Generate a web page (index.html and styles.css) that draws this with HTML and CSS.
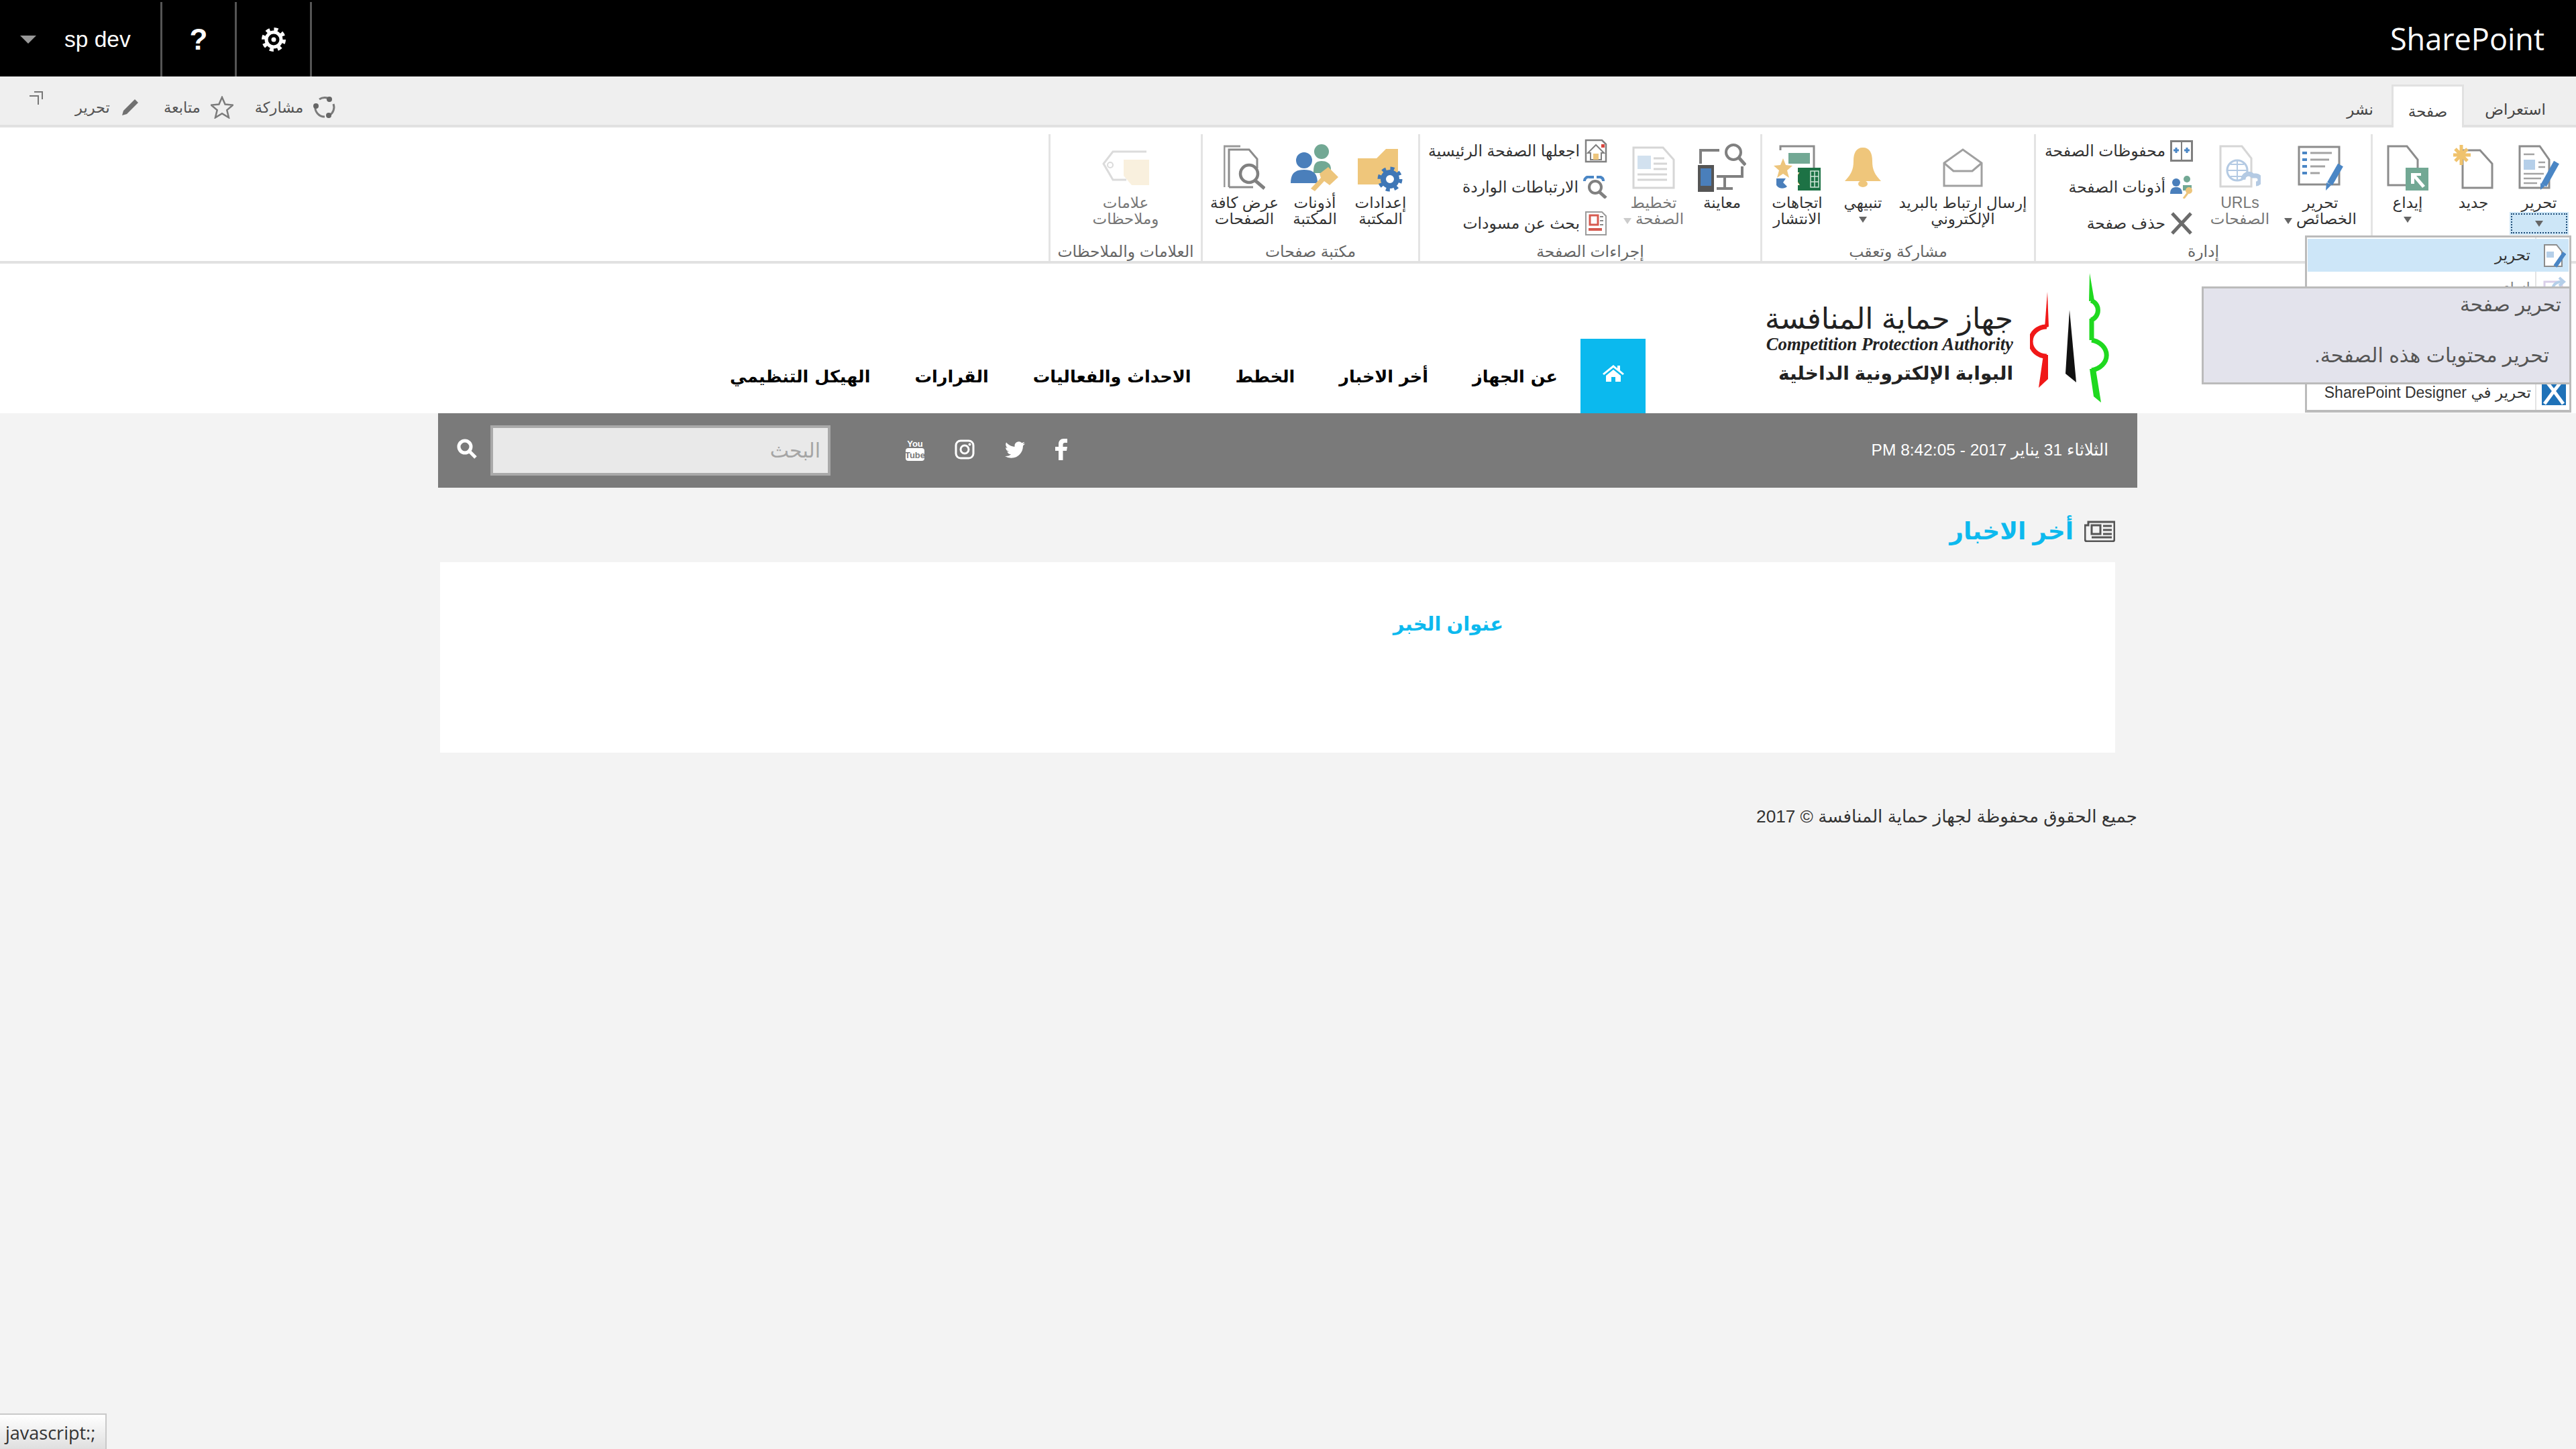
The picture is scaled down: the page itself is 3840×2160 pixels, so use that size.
FILE: index.html
```html
<!DOCTYPE html>
<html lang="ar" dir="rtl">
<head>
    <meta charset="utf-8">
    <title>أخر الاخبار</title>
    <link rel="stylesheet" href="styles.css">
</head>
<body>
    <div class="suite-bar" dir="ltr">
        <div class="suite-item user-item"><span class="user-arrow"></span><span>sp dev</span></div>
        <div class="suite-item help-item">?</div>
        <div class="suite-item gear-item">
            <svg width="38" height="38" viewBox="0 0 38 38"><circle cx="19" cy="19" r="11" fill="none" stroke="#fff" stroke-width="5"/><circle cx="19" cy="19" r="15.5" fill="none" stroke="#fff" stroke-width="5" stroke-dasharray="6 6.17"/><circle cx="19" cy="19" r="3.5" fill="#fff"/></svg>
        </div>
        <div class="suite-brand">SharePoint</div>
    </div>

    <div class="ribbon-tabs">
        <div class="tabs">
            <div class="tab tab-browse">استعراض</div>
            <div class="tab tab-active">صفحة</div>
            <div class="tab tab-publish">نشر</div>
        </div>
        <div class="page-actions">
            <svg class="act-icon" width="34" height="34" viewBox="0 0 34 34"><path d="M9 5a14 14 0 0 1 17 1M30 12a14 14 0 0 1-6 17M17 31A14 14 0 0 1 3 15" fill="none" stroke="#7b7b7b" stroke-width="3"/><circle cx="24" cy="5" r="4" fill="#666"/><circle cx="4" cy="15" r="4" fill="#666"/><circle cx="23" cy="29" r="4" fill="#666"/></svg>
            <span class="act-label">مشاركة</span>
            <svg class="act-icon act-star" width="34" height="34" viewBox="0 0 34 34"><path d="M17 2l4.600 10.600 11.400 1-8.700 7.500 2.700 11.200-10-6-10 6 2.700-11.200L1 13.600l11.400-1z" fill="none" stroke="#7b7b7b" stroke-width="2.500"/></svg>
            <span class="act-label">متابعة</span>
            <svg class="act-icon act-pencil" width="26" height="26" viewBox="0 0 26 26"><path d="M20 1l5 5L8 23l-7 2 2-7z" fill="#707070"/></svg>
            <span class="act-label act-label-last">تحرير</span>
            <svg class="act-focus" width="20" height="20" viewBox="0 0 20 20"><path d="M0 7h13v13M7 1h12v11" fill="none" stroke="#777" stroke-width="2"/></svg>
        </div>
    </div>

    <div class="ribbon">
        <section class="group group-manage">
            <div class="group-body">
                <div class="btn">
                    <svg class="btn-icon" width="62" height="68" viewBox="0 0 62 68"><path d="M2 2h30l14 20v42H2z" fill="#fff" stroke="#8c8c8c" stroke-width="3"/><rect x="8" y="22" width="17" height="15" fill="#b5cfe9"/><path d="M8 14h16M30 26h10M30 33h10M8 43h30M8 50h26M8 57h20" stroke="#a3a3a3" stroke-width="2.500"/><path d="M57 26L38 60" stroke="#4a86c5" stroke-width="9"/><path d="M33 57l7 4-7 6z" fill="#4a86c5"/></svg>
                    <span class="btn-label">تحرير</span>
                    <span class="split-arrow"><span class="arrow"></span></span>
                </div>
                <div class="btn">
                    <svg class="btn-icon" width="60" height="68" viewBox="0 0 60 68"><path d="M14 8h26l18 20v36H14z" fill="#fff" stroke="#8c8c8c" stroke-width="3"/><path d="M12 0v30M0 15h26M3 6l18 18M21 6L3 24" stroke="#f0c36d" stroke-width="5"/></svg>
                    <span class="btn-label">جديد</span>
                </div>
                <div class="btn">
                    <svg class="btn-icon" width="62" height="68" viewBox="0 0 62 68"><path d="M2 2h28l16 20v38H2z" fill="#fff" stroke="#8c8c8c" stroke-width="3"/><rect x="28" y="34" width="34" height="34" fill="#72a894"/><path d="M36 42h15v4h-7l13 15-4 3-12-14v8h-5z" fill="#fff"/></svg>
                    <span class="btn-label">إيداع</span>
                    <span class="arrow arrow-below"></span>
                </div>
            </div>
            <div class="group-label">إدارة</div>
        </section>

        <section class="group group-actions">
            <div class="group-body">
                <div class="btn">
                    <svg class="btn-icon" width="68" height="68" viewBox="0 0 68 68"><rect x="2" y="3" width="60" height="56" fill="#fff" stroke="#8c8c8c" stroke-width="3"/><path d="M7 12h7M7 22h7M7 32h7M7 42h7" stroke="#4a86c5" stroke-width="4"/><path d="M19 12h32M19 22h28M19 32h22M19 42h14" stroke="#a3a3a3" stroke-width="3"/><path d="M64 30L48 58" stroke="#4a86c5" stroke-width="9"/><path d="M43 56l7 4-8 8z" fill="#4a86c5"/></svg>
                    <span class="btn-label">تحرير<br>الخصائص<span class="arrow arrow-inline"></span></span>
                </div>
                <div class="btn btn-off">
                    <svg class="btn-icon" width="62" height="68" viewBox="0 0 62 68"><path d="M2 2h32l14 18v42H2z" fill="#fff" stroke="#c9c9c9" stroke-width="3"/><circle cx="27" cy="38" r="15" fill="#fff" stroke="#9bb9da" stroke-width="3"/><path d="M12 38h30M27 23v30M17 29h20M17 47h20" stroke="#9bb9da" stroke-width="2"/><path d="M36 52a8 8 0 0 1 14-6h5a6 6 0 0 1 0 12" fill="none" stroke="#9bb9da" stroke-width="7"/></svg>
                    <span class="btn-label">URLs<br>الصفحات</span>
                </div>
                <div class="small-col">
                    <div class="small-row">
                        <svg width="34" height="32" viewBox="0 0 34 32"><rect x="1.500" y="1.500" width="31" height="29" fill="#fff" stroke="#808080" stroke-width="3"/><path d="M17 1v30" stroke="#808080" stroke-width="2"/><path d="M5 15h8M9 11v8M21 15h8M25 11v8" stroke="#4a86c5" stroke-width="3"/></svg>
                        <span>محفوظات الصفحة</span>
                    </div>
                    <div class="small-row">
                        <svg width="34" height="34" viewBox="0 0 34 34"><circle cx="25" cy="5" r="5" fill="#72a894"/><circle cx="9" cy="10" r="6" fill="#4a7fbb"/><path d="M0 27c0-8 4-10 9-10s9 2 9 10z" fill="#4a7fbb"/><path d="M19 14h13v8H19z" fill="#72a894"/><circle cx="28" cy="22" r="5" fill="#edc57c"/><path d="M26 26l-6 8" stroke="#edc57c" stroke-width="3"/></svg>
                        <span>أذونات الصفحة</span>
                    </div>
                    <div class="small-row">
                        <svg width="34" height="34" viewBox="0 0 34 34"><path d="M3 2l28 30M31 2L3 32" stroke="#6b6b6b" stroke-width="5"/></svg>
                        <span>حذف صفحة</span>
                    </div>
                </div>
            </div>
            <div class="group-label">إدارة</div>
        </section>

        <section class="group group-share">
            <div class="group-body">
                <div class="btn">
                    <svg class="btn-icon" width="60" height="58" viewBox="0 0 60 58"><path d="M2 22L30 2l28 20v34H2z" fill="#fff" stroke="#a0a0a0" stroke-width="3"/><path d="M2 22l14 12h28l14-12" fill="none" stroke="#a0a0a0" stroke-width="3"/></svg>
                    <span class="btn-label">إرسال ارتباط بالبريد<br>الإلكتروني</span>
                </div>
                <div class="btn">
                    <svg class="btn-icon" width="54" height="60" viewBox="0 0 54 60"><path d="M27 0c10 0 14 8 14 20 0 14 4 20 13 30H0c9-10 13-16 13-30C13 8 17 0 27 0z" fill="#efc67b"/><ellipse cx="27" cy="54" rx="7" ry="5" fill="#efc67b"/></svg>
                    <span class="btn-label">تنبيهي</span>
                    <span class="arrow arrow-below"></span>
                </div>
                <div class="btn">
                    <svg class="btn-icon" width="70" height="68" viewBox="0 0 70 68"><path d="M10 8V2h50v32" fill="none" stroke="#8c8c8c" stroke-width="3"/><rect x="22" y="12" width="32" height="16" fill="#72a894"/><path d="M14 20l4 10 10 1-8 7 3 11-9-6-9 6 3-11-8-7 10-1z" fill="#edc57c"/><path d="M4 50h14l-4 6 6 6c-4 4-12 4-16-2z" fill="#4a7fbb"/><rect x="36" y="34" width="34" height="34" fill="#1d7245"/><path d="M55 39h12v24H55zM55 47h12M55 55h12M61 39v24" fill="#1d7245" stroke="#cfe6d8" stroke-width="1.500"/><text x="39" y="60" class="xl-mark">X</text></svg>
                    <span class="btn-label">اتجاهات<br>الانتشار</span>
                </div>
            </div>
            <div class="group-label">مشاركة وتعقب</div>
        </section>

        <section class="group group-pageact">
            <div class="group-body">
                <div class="btn">
                    <svg class="btn-icon" width="72" height="72" viewBox="0 0 72 72"><path d="M4 30V10h28M66 34v15H28M40 49v17M28 67h24" fill="none" stroke="#808080" stroke-width="4"/><circle cx="53" cy="13" r="11" fill="#fff" stroke="#808080" stroke-width="4"/><path d="M61 21l10 11" stroke="#808080" stroke-width="5"/><rect x="0" y="32" width="24" height="40" fill="#555"/><rect x="4" y="37" width="16" height="26" fill="#4a7fbb"/></svg>
                    <span class="btn-label">معاينة</span>
                </div>
                <div class="btn btn-off">
                    <svg class="btn-icon" width="64" height="68" viewBox="0 0 64 68"><path d="M2 4h44l16 18v42H2z" fill="#fff" stroke="#c9c9c9" stroke-width="3"/><rect x="8" y="16" width="20" height="20" fill="#c4d7ea"/><path d="M32 20h16M32 28h20M32 36h20M8 44h44M8 52h44" stroke="#c9c9c9" stroke-width="3"/></svg>
                    <span class="btn-label">تخطيط<br>الصفحة<span class="arrow arrow-inline"></span></span>
                </div>
                <div class="small-col">
                    <div class="small-row">
                        <svg width="34" height="36" viewBox="0 0 34 36"><path d="M2 2h24l6 6v26H2z" fill="#fff" stroke="#808080" stroke-width="2.500"/><path d="M17 9L5 21h4v10h16V21h4z" fill="#fff" stroke="#808080" stroke-width="2"/><rect x="13" y="22" width="8" height="9" fill="#edc57c"/><rect x="25" y="8" width="5" height="5" fill="#d9463e"/></svg>
                        <span>اجعلها الصفحة الرئيسية</span>
                    </div>
                    <div class="small-row">
                        <svg width="36" height="34" viewBox="0 0 36 34"><path d="M2 8a6 6 0 0 1 8-6h6M20 2h6a6 6 0 0 1 4 6" fill="none" stroke="#4a86c5" stroke-width="4"/><circle cx="18" cy="17" r="9" fill="#fff" stroke="#808080" stroke-width="4"/><path d="M24 24l10 9" stroke="#808080" stroke-width="5"/></svg>
                        <span>الارتباطات الواردة</span>
                    </div>
                    <div class="small-row">
                        <svg width="34" height="36" viewBox="0 0 34 36"><path d="M2 1h24l6 6v28H2z" fill="#fff" stroke="#9b9b9b" stroke-width="2"/><rect x="8" y="6" width="12" height="14" fill="#fff" stroke="#d65a50" stroke-width="3"/><rect x="6" y="25" width="20" height="4" fill="#d65a50"/><path d="M23 8h5M23 14h5M23 20h5" stroke="#888" stroke-width="2"/></svg>
                        <span>بحث عن مسودات</span>
                    </div>
                </div>
            </div>
            <div class="group-label">إجراءات الصفحة</div>
        </section>

        <section class="group group-library">
            <div class="group-body">
                <div class="btn">
                    <svg class="btn-icon" width="68" height="72" viewBox="0 0 68 72"><path d="M0 22h28L42 8h18v53H0z" fill="#efc67b"/><circle cx="48" cy="53" r="10" fill="#fff" stroke="#3f77b6" stroke-width="8"/><circle cx="48" cy="53" r="16" fill="none" stroke="#3f77b6" stroke-width="5" stroke-dasharray="6 6.570"/></svg>
                    <span class="btn-label">إعدادات<br>المكتبة</span>
                </div>
                <div class="btn">
                    <svg class="btn-icon" width="72" height="70" viewBox="0 0 72 70"><circle cx="46" cy="11" r="11" fill="#72a894"/><path d="M34 40c0-12 5-15 12-15s14 3 14 12v6H34z" fill="#72a894"/><circle cx="20" cy="24" r="12" fill="#4a7fbb"/><path d="M0 58c0-16 8-20 20-20s20 4 20 20z" fill="#4a7fbb"/><path d="M56 34l15 15-13 12-8-6-14 15-6-4 15-16-2-6z" fill="#edc57c"/></svg>
                    <span class="btn-label">أذونات<br>المكتبة</span>
                </div>
                <div class="btn">
                    <svg class="btn-icon" width="62" height="66" viewBox="0 0 62 66"><path d="M1 62V1h24" fill="none" stroke="#9a9a9a" stroke-width="3"/><path d="M8 62V6h30l12 14v14M8 62h36" fill="none" stroke="#8c8c8c" stroke-width="3"/><circle cx="38" cy="42" r="13" fill="#fff" stroke="#808080" stroke-width="4.500"/><path d="M47 52l14 12" stroke="#808080" stroke-width="5"/></svg>
                    <span class="btn-label">عرض كافة<br>الصفحات</span>
                </div>
            </div>
            <div class="group-label">مكتبة صفحات</div>
        </section>

        <section class="group group-tags">
            <div class="group-body">
                <div class="btn btn-off">
                    <svg class="btn-icon" width="70" height="52" viewBox="0 0 70 52"><path d="M66 2H16L2 20l14 24h20" fill="none" stroke="#cfcfcf" stroke-width="3"/><circle cx="12" cy="22" r="4" fill="none" stroke="#cfcfcf" stroke-width="2"/><path d="M32 14h38v38H44L32 38z" fill="#f8ecd4"/></svg>
                    <span class="btn-label">علامات<br>وملاحظات</span>
                </div>
            </div>
            <div class="group-label">العلامات والملاحظات</div>
        </section>
    </div>

    <header class="site-header">
        <div class="logo">
            <svg class="logo-mark" width="124" height="194" viewBox="0 0 124 194">
                <path d="M89 0l7 41-8 1z" fill="#1fd91f"/>
                <path d="M91 41a14 15 0 0 1 0 29M92 68v32M92 100a28 23 0 0 1 0 45" fill="none" stroke="#1fd91f" stroke-width="7"/>
                <path d="M89 143h9l8 50-11-9z" fill="#1fd91f"/>
                <path d="M26 28l2 52-6 2z" fill="#f01818"/>
                <path d="M25 80a24 22 0 0 0 0 44" fill="none" stroke="#f01818" stroke-width="7"/>
                <path d="M20 122h7v36l-14 13z" fill="#f01818"/>
                <path d="M59 55l10 108-16-13z" fill="#111"/>
            </svg>
            <div class="logo-text">
                <div class="logo-line1">جهاز حماية المنافسة</div>
                <div class="logo-line2" dir="ltr">Competition Protection Authority</div>
                <div class="logo-line3">البوابة الإلكترونية الداخلية</div>
            </div>
        </div>
        <nav class="main-nav">
            <a class="nav-home">
                <svg width="32" height="26" viewBox="0 0 32 26"><path d="M16 1L0 14l2 2L16 5l14 11 2-2-6-5V2h-4v4z" fill="#fff"/><path d="M16 8L5 17v9h8v-7h6v7h8v-9z" fill="#fff"/></svg>
            </a>
            <a class="nav-link">عن الجهاز</a>
            <a class="nav-link">أخر الاخبار</a>
            <a class="nav-link">الخطط</a>
            <a class="nav-link">الاحداث والفعاليات</a>
            <a class="nav-link">القرارات</a>
            <a class="nav-link">الهيكل التنظيمي</a>
        </nav>
    </header>

    <div class="container">
        <div class="toolbar">
            <div class="date-text">الثلاثاء 31 يناير 2017 - PM 8:42:05</div>
            <div class="social">
                <svg width="18" height="32" viewBox="0 0 18 32"><path d="M5 32V18H0v-6h5V8c0-5 3-8 7.500-8H18v6h-3.500C12.500 6 11.500 7 11.500 9v3H18l-1 6h-5.500v14z" fill="#fff"/></svg>
                <svg width="30" height="25" viewBox="0 0 24 20"><path d="M23.950 2.570a10 10 0 0 1-2.820.770 4.960 4.960 0 0 0 2.160-2.720c-.950.550-2 .960-3.120 1.190a4.920 4.920 0 0 0-8.380 4.480C7.690 6.100 4.070 4.130 1.640 1.160a4.820 4.820 0 0 0-.670 2.480c0 1.710.870 3.210 2.190 4.100a4.900 4.900 0 0 1-2.230-.620v.060a4.920 4.920 0 0 0 3.950 4.830 5 5 0 0 1-2.210.080 4.940 4.940 0 0 0 4.600 3.420A9.870 9.870 0 0 1 0 17.540a14 14 0 0 0 7.560 2.210c9.050 0 14-7.500 14-13.980 0-.210 0-.420-.010-.630A9.940 9.940 0 0 0 24 2.590z" fill="#fff"/></svg>
                <svg width="30" height="30" viewBox="0 0 30 30"><rect x="2" y="2" width="26" height="26" rx="7" fill="none" stroke="#fff" stroke-width="3"/><circle cx="15" cy="15" r="6" fill="none" stroke="#fff" stroke-width="3"/><circle cx="22.500" cy="7.500" r="2" fill="#fff"/></svg>
                <svg width="28" height="34" viewBox="0 0 28 34"><text x="14" y="13" class="yt-you">You</text><rect x="0" y="15" width="28" height="19" rx="4" fill="#fff"/><text x="14" y="30" class="yt-tube">Tube</text></svg>
            </div>
            <div class="search-box">البحث</div>
            <svg class="search-icon" width="30" height="30" viewBox="0 0 30 30"><circle cx="12" cy="12" r="9" fill="none" stroke="#fff" stroke-width="5"/><path d="M19 19l9 9" stroke="#fff" stroke-width="5"/></svg>
        </div>

        <main class="news">
            <h1 class="news-title">
                <svg width="46" height="32" viewBox="0 0 46 32"><path d="M6 2h39v26a3 3 0 0 1-3 3H4a3 3 0 0 1-3-3V7h5z" fill="none" stroke="#555" stroke-width="3"/><rect x="11" y="7" width="13" height="13" fill="none" stroke="#555" stroke-width="3"/><path d="M28 8h13M28 14h13M28 20h13M11 25h30" stroke="#555" stroke-width="3"/></svg>
                <span>أخر الاخبار</span>
            </h1>
            <div class="news-card">
                <a class="news-item">عنوان الخبر</a>
            </div>
        </main>

        <footer class="site-footer">جميع الحقوق محفوظة لجهاز حماية المنافسة © 2017</footer>
    </div>

    <div class="menu">
        <div class="menu-item menu-hover">
            <svg width="34" height="36" viewBox="0 0 34 36"><path d="M2 2h18l8 10v22H2z" fill="#fff" stroke="#8c8c8c" stroke-width="2"/><rect x="5" y="12" width="11" height="9" fill="#b5cfe9"/><path d="M32 14L18 34" stroke="#4a86c5" stroke-width="6"/></svg>
            <span>تحرير</span>
        </div>
        <div class="menu-item menu-off">
            <svg width="34" height="36" viewBox="0 0 34 36"><rect x="2" y="8" width="26" height="26" fill="none" stroke="#d9cfe9" stroke-width="3"/><path d="M14 18c2-8 8-10 14-10M24 2l7 6-7 6" fill="none" stroke="#b5cfe9" stroke-width="4"/></svg>
            <span>إنهاء</span>
        </div>
        <div class="menu-item menu-spd">
            <svg width="36" height="36" viewBox="0 0 36 36"><rect width="36" height="36" fill="#1f72b8"/><path d="M8 2l10 13L28 2M4 34l14-19 14 19" fill="none" stroke="#fff" stroke-width="5"/></svg>
            <span>تحرير في SharePoint Designer</span>
        </div>
    </div>

    <div class="tooltip">
        <div class="tooltip-title">تحرير صفحة</div>
        <div class="tooltip-text">تحرير محتويات هذه الصفحة.</div>
    </div>

    <div class="status-link" dir="ltr">javascript:;</div>
</body>
</html>
```

FILE: styles.css
```css
html, body {
    margin: 0;
    padding: 0;
}

body {
    position: relative;
    width: 3840px;
    height: 2160px;
    overflow: hidden;
    background-color: #f3f3f3;
    color: #333;
    font-family: "Liberation Sans", "DejaVu Sans", sans-serif;
}

/* suite bar */
.suite-bar {
    display: flex;
    align-items: stretch;
    height: 114px;
    background-color: #000;
    color: #fff;
}

.suite-item {
    display: flex;
    align-items: center;
    justify-content: center;
    box-sizing: border-box;
    border-right: 3px solid #555;
    margin-top: 3px;
}

.user-item {
    width: 242px;
    padding-left: 30px;
    justify-content: flex-start;
    font-size: 33.5px;
    gap: 42px;
}

.user-arrow {
    width: 0;
    height: 0;
    border-left: 12px solid transparent;
    border-right: 12px solid transparent;
    border-top: 12px solid #999;
}

.help-item {
    width: 111px;
    font-size: 44px;
    font-weight: bold;
}

.gear-item {
    width: 112px;
}

.suite-brand {
    margin-left: auto;
    padding-right: 47px;
    line-height: 116px;
    font-family: "Open Sans", sans-serif;
    font-size: 45px;
    font-weight: 400;
}

/* ribbon tabs */
.ribbon-tabs {
    display: flex;
    justify-content: space-between;
    box-sizing: border-box;
    height: 76px;
    padding: 0 14px 0 44px;
    background-color: #efefef;
    border-bottom: 4px solid #e1e1e1;
}

.tabs {
    display: flex;
    align-items: flex-end;
    height: 76px;
}

.tab {
    box-sizing: border-box;
    height: 76px;
    padding-top: 34px;
    text-align: center;
    font-size: 23px;
    line-height: 30px;
    color: #444;
}

.tab-browse { width: 153px; }
.tab-publish { width: 94px; }

.tab-active {
    width: 108px;
    height: 64px;
    padding-top: 22px;
    background-color: #fff;
    border: 3px solid #e1e1e1;
    border-bottom: none;
}

.page-actions {
    display: flex;
    align-items: center;
    height: 92px;
    font-size: 22.5px;
    color: #555;
}

.act-label {
    margin-right: 15px;
}

.act-label-last {
    margin-right: 17px;
}

.act-star {
    margin-right: 32px;
}

.act-pencil {
    margin-right: 37px;
}

.act-focus {
    margin-right: 48px;
    margin-bottom: 28px;
}

/* ribbon */
.ribbon {
    display: flex;
    height: 203px;
    box-sizing: border-box;
    background-color: #fff;
    border-bottom: 4px solid #e1e1e1;
}

.group {
    display: flex;
    flex-direction: column;
    box-sizing: border-box;
    height: 189px;
    margin-top: 10px;
    border-left: 3px solid #e4e4e4;
}

.group-body {
    display: flex;
    flex: 1;
}

.group-label {
    height: 26px;
    line-height: 24px;
    text-align: center;
    font-size: 23.5px;
    color: #666;
    white-space: nowrap;
}

.group-manage { width: 306px; }
.group-actions { width: 502px; }
.group-share { width: 408px; }
.group-pageact { width: 510px; }
.group-library { width: 324px; }
.group-tags { width: 227px; }

.group-manage .group-body { display: grid; grid-template-columns: 98px 98px 98px; padding-right: 6px; }
.group-actions .group-body { display: grid; grid-template-columns: 130px 110px auto; padding-right: 10px; }
.group-share .group-body { display: grid; grid-template-columns: 180px 118px 78px; padding-right: 16px; }
.group-pageact .group-body { display: grid; grid-template-columns: 90px 114px auto; padding-right: 12px; }
.group-library .group-body { display: grid; grid-template-columns: 92px 104px 106px; padding-right: 10px; }
.group-tags .group-body { justify-content: center; }

.btn {
    display: flex;
    flex-direction: column;
    align-items: center;
}

.btn-icon {
    flex: none;
    height: 72px;
    margin-top: 14px;
}

.btn-label {
    margin-top: 4px;
    text-align: center;
    font-size: 23px;
    line-height: 24px;
    color: #333;
    white-space: nowrap;
}

.btn-off .btn-icon {
    opacity: .75;
}

.btn-off .btn-label {
    color: #777;
}

.arrow {
    display: inline-block;
    width: 0;
    height: 0;
    border-left: 6px solid transparent;
    border-right: 6px solid transparent;
    border-top: 9px solid #666;
}

.arrow-below {
    margin-top: 9px;
}

.arrow-inline {
    margin-right: 6px;
}

.btn-off .arrow {
    border-top-color: #ccc;
}

.split-arrow {
    display: flex;
    align-items: center;
    justify-content: center;
    box-sizing: border-box;
    flex: none;
    width: 84px;
    height: 30px;
    margin-top: 4px;
    background-color: #cde6f7;
    border: 2px dotted #1f4e79;
    outline: 2px solid #cde6f7;
}

.small-col {
    display: flex;
    flex-direction: column;
    gap: 8px;
    padding-top: 2px;
    padding-right: 15px;
}

.group-pageact .small-col {
    padding-right: 12px;
}

.small-row {
    display: flex;
    align-items: center;
    gap: 7px;
    height: 46px;
    font-size: 23.5px;
    white-space: nowrap;
}

.xl-mark {
    font-family: "Liberation Sans", sans-serif;
    font-size: 28px;
    font-weight: bold;
    fill: #fff;
}

/* site header */
.site-header {
    display: flex;
    align-items: flex-end;
    gap: 176px;
    box-sizing: border-box;
    height: 223px;
    padding-right: 690px;
    background-color: #fff;
}

.logo {
    display: flex;
    align-self: flex-start;
    gap: 25px;
    width: 521px;
    margin-top: 14px;
}

.logo-mark {
    flex: none;
}

.logo-text {
    padding-top: 48px;
    white-space: nowrap;
    color: #222;
}

.logo-line1 {
    line-height: 40px;
    font-size: 44px;
}

.logo-line2 {
    line-height: 36px;
    text-align: right;
    font-family: "Liberation Serif", serif;
    font-size: 26.8px;
    font-style: italic;
    font-weight: bold;
}

.logo-line3 {
    line-height: 52px;
    font-size: 28px;
    font-weight: bold;
}

.main-nav {
    display: flex;
    align-items: center;
    height: 111px;
    gap: 66px;
}

.nav-home {
    display: flex;
    align-items: center;
    justify-content: center;
    width: 97px;
    height: 111px;
    margin-left: -32px;
    padding-bottom: 10px;
    box-sizing: border-box;
    background-color: #0bb9ee;
}

.nav-link {
    font-family: "DejaVu Sans", sans-serif;
    font-size: 25.5px;
    font-weight: bold;
    color: #000;
    white-space: nowrap;
}

/* toolbar */
.container {
    box-sizing: border-box;
    width: 2533px;
    margin-right: 654px;
}

.toolbar {
    display: flex;
    align-items: center;
    box-sizing: border-box;
    height: 111px;
    padding: 0 43px 0 28px;
    background-color: #7a7a7a;
}

.date-text {
    margin-left: auto;
    margin-bottom: 2px;
    font-size: 24.5px;
    color: #fff;
}

.social {
    display: flex;
    align-items: center;
    gap: 45px;
    margin-left: 112px;
    margin-bottom: 3px;
}

.yt-you, .yt-tube {
    font-family: "Liberation Sans", sans-serif;
    font-size: 13px;
    text-anchor: middle;
    font-weight: bold;
}

.yt-you { fill: #fff; }
.yt-tube { fill: #7a7a7a; }

.search-box {
    box-sizing: border-box;
    width: 507px;
    height: 75px;
    padding-right: 11px;
    line-height: 67px;
    font-size: 30px;
    color: #a5a5a5;
    background-color: #e9e9e9;
    border: 4px solid #a9a9a9;
}

.search-icon {
    margin-right: 20px;
    margin-bottom: 6px;
}

/* news */
.news {
    width: 2497px;
    margin-right: 33px;
}

.news-title {
    display: flex;
    align-items: center;
    gap: 16px;
    box-sizing: border-box;
    height: 111px;
    margin: 0;
    padding-top: 18px;
    font-size: 36px;
    font-weight: bold;
    color: #0db9ee;
}

.news-card {
    box-sizing: border-box;
    height: 284px;
    padding: 75px 912px 0 0;
    background-color: #fff;
}

.news-item {
    font-size: 29px;
    font-weight: bold;
    color: #0db9ee;
}

.site-footer {
    margin-top: 80px;
    font-size: 26.2px;
    color: #333;
}

/* open menu and its tooltip */
.menu {
    position: absolute;
    top: 351px;
    left: 3436px;
    box-sizing: border-box;
    width: 397px;
    height: 264px;
    padding: 2px 1px;
    background-color: #fff;
    border: 3px solid #bbb;
    border-bottom-width: 4px;
}

.menu::before {
    content: "";
    position: absolute;
    top: 0;
    bottom: 0;
    left: 340px;
    width: 2px;
    background-color: #e4e4e4;
}

.menu-item {
    position: relative;
    display: flex;
    align-items: center;
    gap: 19px;
    height: 49px;
    padding-right: 4px;
    font-size: 23px;
}

.menu-hover {
    background-color: #cde6f8;
}

.menu-off {
    color: #888;
}

.menu-spd {
    gap: 16px;
    margin-top: 107px;
}

.tooltip {
    position: absolute;
    top: 427px;
    left: 3282px;
    box-sizing: border-box;
    width: 551px;
    height: 146px;
    padding-right: 12px;
    background-color: #e3e3ec;
    border: 3px solid #bbb;
    color: #555;
}

.tooltip-title {
    padding-top: 6px;
    line-height: 36px;
    font-size: 29.5px;
}

.tooltip-text {
    padding: 40px 18px 0 0;
    line-height: 36px;
    font-size: 30px;
}

.status-link {
    position: absolute;
    left: 0;
    bottom: 0;
    box-sizing: border-box;
    width: 159px;
    height: 53px;
    padding-left: 8px;
    line-height: 54px;
    font-family: "Open Sans", sans-serif;
    font-size: 27px;
    color: #333;
    background: linear-gradient(#fff, #dfdfdf);
    border-top: 2px solid #c9c9c9;
    border-right: 2px solid #c9c9c9;
}
```
